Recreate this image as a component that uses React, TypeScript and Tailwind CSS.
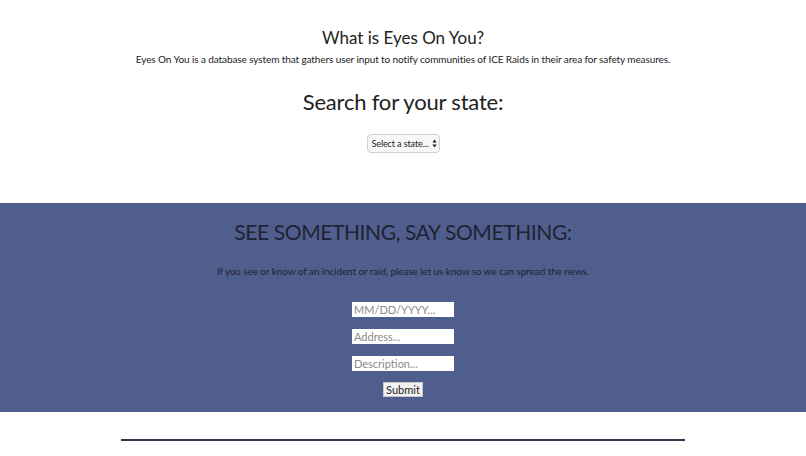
import React from "react";

const inputClass =
  "h-[15px] w-[102px] bg-white px-[2px] text-[11px] leading-[15px] text-[#222] outline-none placeholder:text-[#8a8a8a]";

const App: React.FC = () => {
  return (
    <div className="w-full min-h-[456px] bg-white font-['Lato',sans-serif] text-[#222]">
      <section className="flex flex-col items-center pt-[27px]">
        <h1 className="text-[17px] leading-[22px]">What is Eyes On You?</h1>
        <p className="mt-[3px] text-[10px] leading-[14px] tracking-[-0.1px]">
          Eyes On You is a database system that gathers user input to notify communities of ICE Raids in their area for safety measures.
        </p>
        <h2 className="mt-[22px] text-[22px] leading-[28px] tracking-[-0.2px]">Search for your state:</h2>
        <div className="relative mt-[18px] h-[19px] w-[73px]">
          <select className="block h-[19px] w-full appearance-none rounded-[4px] border border-[#d0d0d0] bg-[#f7f7f7] pl-[4px] pr-[7px] text-[9px] leading-[17px] tracking-[-0.1px] text-[#222] outline-none">
            <option>Select a state...</option>
          </select>
          <svg
            className="pointer-events-none absolute right-[3px] top-[5px]"
            width="5"
            height="9"
            viewBox="0 0 5 9"
          >
            <path d="M2.5 0.5 L4.6 3.6 H0.4 Z" fill="#222" />
            <path d="M2.5 8.5 L4.6 5.4 H0.4 Z" fill="#222" />
          </svg>
        </div>
      </section>

      <section className="mt-[50px] flex h-[209px] flex-col items-center bg-[#505e8e] pt-[15px] text-[#1e2333]">
        <h2 className="text-[21px] leading-[28px] tracking-[-0.4px]">SEE SOMETHING, SAY SOMETHING:</h2>
        <p className="mt-[18px] text-[10px] leading-[14px] tracking-[-0.1px]">
          If you see or know of an incident or raid, please let us know so we can spread the news.
        </p>
        <form className="mt-[24px] flex flex-col items-center gap-[12px]">
          <input placeholder="MM/DD/YYYY..." className={inputClass} />
          <input placeholder="Address..." className={inputClass} />
          <input placeholder="Description..." className={inputClass} />
          <button
            type="button"
            className="-mt-px h-[15px] w-[40px] border border-[#c8c8c8] bg-[#f3f3f3] text-[11px] leading-[13px] text-[#222]"
          >
            Submit
          </button>
        </form>
      </section>

      <div className="mx-auto mt-[27px] h-[2px] w-[564px] bg-[#2c3a4c]" />
    </div>
  );
};

export default App;
